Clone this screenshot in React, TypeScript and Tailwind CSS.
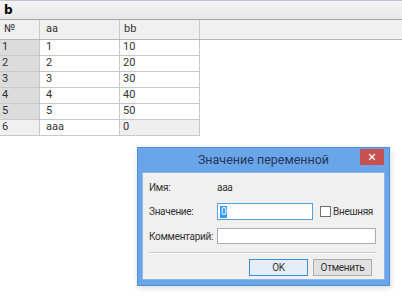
import { X } from 'lucide-react';

const rows = [
  { n: '1', aa: '1', bb: '10' },
  { n: '2', aa: '2', bb: '20' },
  { n: '3', aa: '3', bb: '30' },
  { n: '4', aa: '4', bb: '40' },
  { n: '5', aa: '5', bb: '50' },
  { n: '6', aa: 'aaa', bb: '0' },
];

const font = { fontFamily: 'Roboto, "Noto Sans", sans-serif' };

function Grid() {
  return (
    <div className="flex flex-col text-[11px] text-[#333]">
      <div className="h-[20px] border-t border-[#bcc6d2] border-b border-b-[#a8a8a8] bg-gradient-to-b from-[#f4f4f4] to-[#e8e8e8] flex items-center pl-[4px]">
        <span className="font-bold text-[12px] text-black" style={{ fontFamily: '"DejaVu Sans", sans-serif' }}>b</span>
      </div>
      <div className="h-[20px] flex bg-[#f0f0f0] border-b border-[#b4b4b4]">
        <div className="w-[40px] border-r border-[#c8c8c8] pl-[4px] flex items-center">№</div>
        <div className="w-[80px] border-r border-[#c8c8c8] pl-[6px] flex items-center">aa</div>
        <div className="w-[80px] border-r border-[#c8c8c8] pl-[4px] flex items-center">bb</div>
        <div className="flex-1" />
      </div>
      {rows.map((r, i) => {
        const last = i === rows.length - 1;
        return (
          <div key={r.n} className="h-[16px] flex">
            <div className={`w-[40px] border-r border-b border-[#c8c8c8] pl-[2px] flex items-center ${last ? 'bg-[#f0f0f0]' : 'bg-[#dcdcdc]'}`}>{r.n}</div>
            <div className="w-[80px] border-r border-b border-[#c8c8c8] pl-[6px] flex items-center bg-white">{r.aa}</div>
            <div className={`w-[80px] border-r border-b border-[#c8c8c8] pl-[3px] flex items-center ${last ? 'bg-[#efefef]' : 'bg-white'}`}>{r.bb}</div>
          </div>
        );
      })}
    </div>
  );
}

function Dialog() {
  return (
    <div className="absolute left-[137px] top-[147px] w-[253px] h-[139px] bg-[#6ba5e9] border border-[#4f8fd8] flex flex-col shadow-[1px_2px_6px_rgba(0,0,0,0.15)]">
      <div className="h-[24px] relative flex items-center justify-center">
        <span className="text-[12.5px] text-[#24395a]">Значение переменной</span>
        <div className="absolute right-[5px] top-[1px] w-[24px] h-[16px] bg-[#c75050] flex items-center justify-center">
          <X size={10} strokeWidth={3} className="text-white" />
        </div>
      </div>
      <div className="mx-[4px] mb-[5px] flex-1 bg-[#f0f0f0] border border-[#8fb8e8] px-[6px] pt-[6px] flex flex-col text-[10px] tracking-[-0.3px] text-[#333]">
        <div className="h-[16px] flex items-center">
          <span className="w-[68px]">Имя:</span>
          <span>aaa</span>
        </div>
        <div className="h-[17px] mt-[8px] flex items-center">
          <span className="w-[68px]">Значение:</span>
          <div className="w-[96px] h-[17px] border border-[#5a9ee0] bg-white flex items-center pl-[2px]">
            <span className="bg-[#3399ff] text-white px-[1px] leading-[12px]">0</span>
          </div>
          <div className="ml-[7px] w-[11px] h-[11px] border border-[#707070] bg-white" />
          <span className="ml-[2px]">Внешняя</span>
        </div>
        <div className="h-[16px] mt-[8px] flex items-center">
          <span className="w-[68px]">Комментарий:</span>
          <div className="w-[159px] h-[16px] border border-[#abadb3] bg-white" />
        </div>
        <div className="mt-[8px] w-[228px] border-t border-[#c8c8c8] border-b border-b-white" />
        <div className="mt-[5px] flex justify-end pr-[6px] gap-[5px]">
          <div className="w-[59px] h-[17px] border border-[#3c90d8] bg-[#e5eef7] flex items-center justify-center">OK</div>
          <div className="w-[59px] h-[17px] border border-[#adadad] bg-[#e1e1e1] flex items-center justify-center">Отменить</div>
        </div>
      </div>
    </div>
  );
}

export default function App() {
  return (
    <div className="relative w-[402px] h-[302px] bg-white overflow-hidden" style={font}>
      <Grid />
      <Dialog />
    </div>
  );
}
